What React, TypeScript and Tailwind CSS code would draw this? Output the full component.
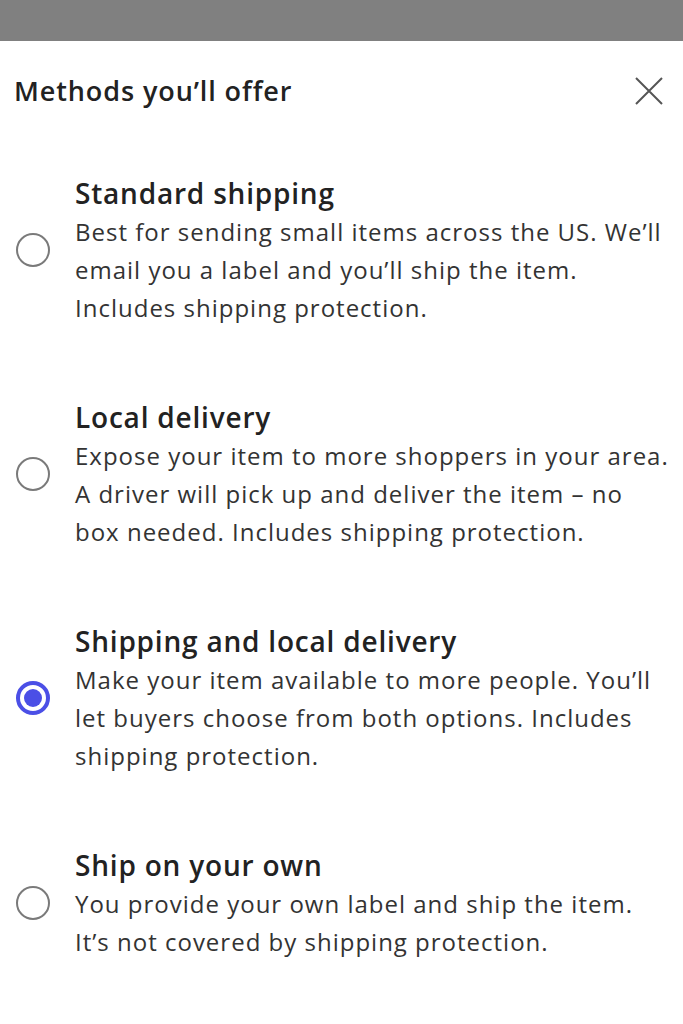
import React from "react";

type Method = {
  title: string;
  lines: string[];
  selected?: boolean;
};

const methods: Method[] = [
  {
    title: "Standard shipping",
    lines: [
      "Best for sending small items across the US. We\u2019ll",
      "email you a label and you\u2019ll ship the item.",
      "Includes shipping protection.",
    ],
  },
  {
    title: "Local delivery",
    lines: [
      "Expose your item to more shoppers in your area.",
      "A driver will pick up and deliver the item \u2013 no",
      "box needed. Includes shipping protection.",
    ],
  },
  {
    title: "Shipping and local delivery",
    lines: [
      "Make your item available to more people. You\u2019ll",
      "let buyers choose from both options. Includes",
      "shipping protection.",
    ],
    selected: true,
  },
  {
    title: "Ship on your own",
    lines: [
      "You provide your own label and ship the item.",
      "It\u2019s not covered by shipping protection.",
    ],
  },
];

function Radio({ selected }: { selected?: boolean }) {
  if (selected) {
    return (
      <div className="w-[34px] h-[34px] rounded-full border-[4px] border-[#4b4fe6] flex items-center justify-center">
        <div className="w-[18px] h-[18px] rounded-full bg-[#4b4fe6]" />
      </div>
    );
  }
  return <div className="w-[34px] h-[34px] rounded-full border-2 border-[#7a7a7a]" />;
}

export default function App() {
  return (
    <div
      className="w-[683px] h-[1024px] bg-white text-[#222] overflow-hidden"
      style={{ fontFamily: "'Open Sans', 'Noto Sans', sans-serif" }}
    >
      <div className="h-[41px] bg-[#808080]" />

      <header className="h-[100px] flex items-center justify-between pl-[14px] pr-[20px]">
        <h1 className="text-[27px] font-semibold tracking-[0.9px] text-[#222]">
          Methods you&rsquo;ll offer
        </h1>
        <svg width="28" height="28" viewBox="0 0 28 28" fill="none" stroke="#555" strokeWidth="2">
          <path d="M1 1 L27 27 M27 1 L1 27" />
        </svg>
      </header>

      <div className="mt-[32px] flex flex-col gap-[70px]">
        {methods.map((m) => (
          <div key={m.title} className="flex items-center">
            <div className="w-[75px] pl-[16px] flex-none">
              <Radio selected={m.selected} />
            </div>
            <div className="flex flex-col">
              <div className="text-[28px] leading-[40px] font-semibold tracking-[0.8px] text-[#222]">
                {m.title}
              </div>
              {m.lines.map((l) => (
                <div
                  key={l}
                  className="text-[24px] leading-[38px] tracking-[1px] text-[#333] whitespace-nowrap"
                >
                  {l}
                </div>
              ))}
            </div>
          </div>
        ))}
      </div>
    </div>
  );
}
